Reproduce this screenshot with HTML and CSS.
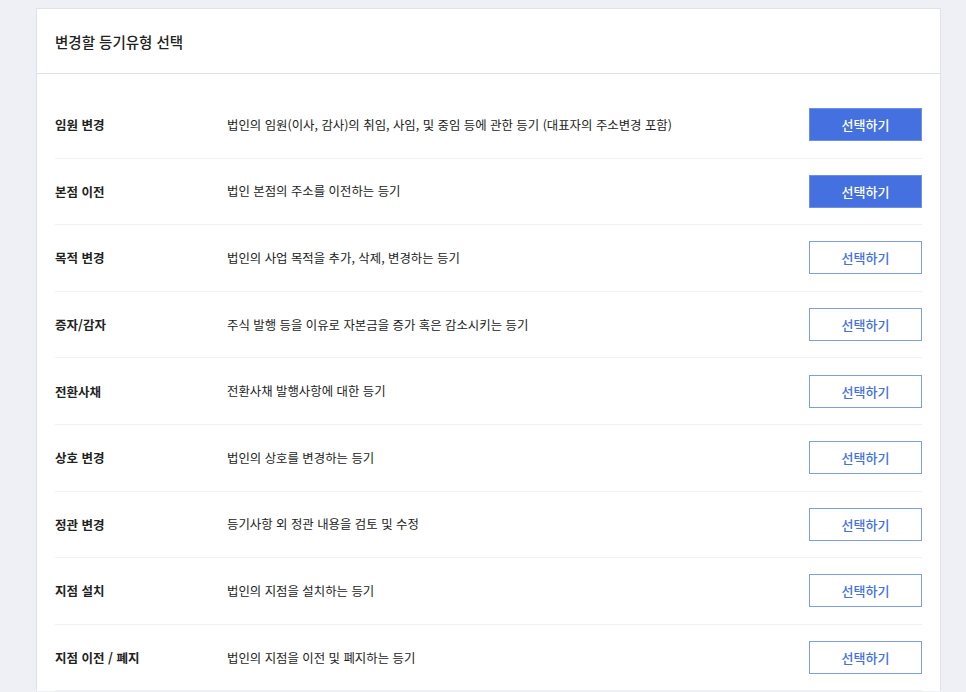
FILE: index.html
```html
<!DOCTYPE html>
<html lang="ko">
<head>
<meta charset="utf-8">
<title>변경할 등기유형 선택</title>
<link rel="stylesheet" href="styles.css">
</head>
<body>
<div class="page">
  <section class="card">
    <header class="card-head">
      <h2 class="card-title">변경할 등기유형 선택</h2>
    </header>
    <div class="card-body">
      <ul class="type-list">
        <li class="type-row">
          <span class="type-name">임원 변경</span>
          <span class="type-desc">법인의 임원(이사, 감사)의 취임, 사임, 및 중임 등에 관한 등기 (대표자의 주소변경 포함)</span>
          <button class="btn btn-primary" type="button">선택하기</button>
        </li>
        <li class="type-row">
          <span class="type-name">본점 이전</span>
          <span class="type-desc">법인 본점의 주소를 이전하는 등기</span>
          <button class="btn btn-primary" type="button">선택하기</button>
        </li>
        <li class="type-row">
          <span class="type-name">목적 변경</span>
          <span class="type-desc">법인의 사업 목적을 추가, 삭제, 변경하는 등기</span>
          <button class="btn btn-outline" type="button">선택하기</button>
        </li>
        <li class="type-row">
          <span class="type-name">증자/감자</span>
          <span class="type-desc">주식 발행 등을 이유로 자본금을 증가 혹은 감소시키는 등기</span>
          <button class="btn btn-outline" type="button">선택하기</button>
        </li>
        <li class="type-row">
          <span class="type-name">전환사채</span>
          <span class="type-desc">전환사채 발행사항에 대한 등기</span>
          <button class="btn btn-outline" type="button">선택하기</button>
        </li>
        <li class="type-row">
          <span class="type-name">상호 변경</span>
          <span class="type-desc">법인의 상호를 변경하는 등기</span>
          <button class="btn btn-outline" type="button">선택하기</button>
        </li>
        <li class="type-row">
          <span class="type-name">정관 변경</span>
          <span class="type-desc">등기사항 외 정관 내용을 검토 및 수정</span>
          <button class="btn btn-outline" type="button">선택하기</button>
        </li>
        <li class="type-row">
          <span class="type-name">지점 설치</span>
          <span class="type-desc">법인의 지점을 설치하는 등기</span>
          <button class="btn btn-outline" type="button">선택하기</button>
        </li>
        <li class="type-row">
          <span class="type-name">지점 이전 / 폐지</span>
          <span class="type-desc">법인의 지점을 이전 및 폐지하는 등기</span>
          <button class="btn btn-outline" type="button">선택하기</button>
        </li>
      </ul>
    </div>
  </section>
</div>
</body>
</html>
```

FILE: styles.css
```css
* { box-sizing: border-box; }

html, body {
  margin: 0;
  padding: 0;
}

body {
  background: #eff0f5;
  font-family: "Noto Sans CJK KR", "Noto Sans", sans-serif;
  color: #222;
  height: 692px;
  overflow: hidden;
}

.page {
  padding: 8px 25px 0 36px;
}

.card {
  background: #fff;
  border: 1px solid #e1e2e7;
  border-bottom: none;
}

.card-head {
  height: 65px;
  display: flex;
  align-items: center;
  padding: 0 18px;
  border-bottom: 1px solid #dfe0e4;
}

.card-title {
  margin: 0;
  font-size: 14.5px;
  font-weight: 500;
  color: #222;
}

.card-body {
  padding: 18px 18px 0;
}

.type-list {
  list-style: none;
  margin: 0;
  padding: 0;
}

.type-row {
  display: flex;
  align-items: center;
  height: 66.6px;
  border-bottom: 1px solid #f0f1f4;
}

.type-name {
  width: 172px;
  flex: none;
  font-size: 12.5px;
  font-weight: 700;
  color: #222;
}

.type-desc {
  flex: 1;
  font-size: 12.4px;
  color: #222;
}

.btn {
  flex: none;
  width: 113px;
  height: 33px;
  font-family: inherit;
  font-size: 13px;
  font-weight: 500;
  border-radius: 0;
  cursor: pointer;
}

.btn-primary {
  background: #4470e0;
  color: #fff;
  border: 1px solid #6e8fe6;
}

.btn-outline {
  background: #fff;
  color: #4470e0;
  border: 1px solid #7e9ce9;
}
```
